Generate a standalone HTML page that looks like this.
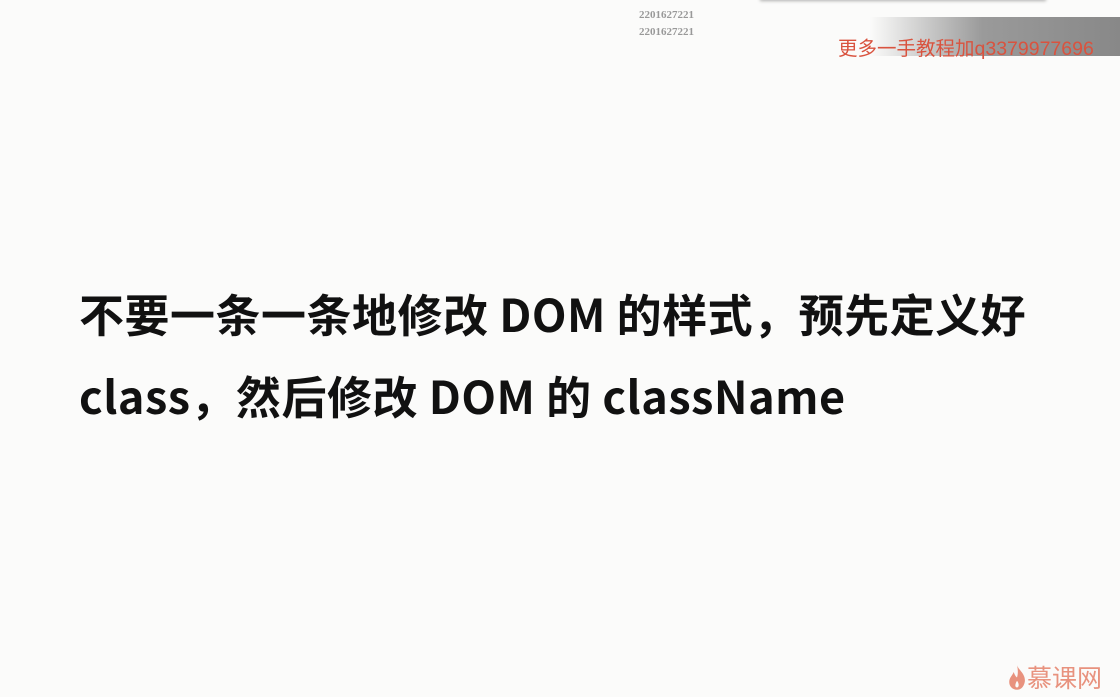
<!DOCTYPE html>
<html><head><meta charset="utf-8"><style>
html,body{margin:0;padding:0}
body{width:1120px;height:697px;background:#fbfbfa;position:relative;overflow:hidden;font-family:"Liberation Sans","Noto Sans CJK SC",sans-serif}
.top{position:absolute;left:760px;top:-4px;width:286px;height:4px;box-shadow:0 1px 3px rgba(0,0,0,.3);background:#fff}
.id{position:absolute;left:639px;font-family:"Liberation Serif",serif;font-size:11px;color:#999;font-weight:bold}
.bar{position:absolute;left:870px;top:17px;width:250px;height:39px;background:linear-gradient(to right,rgba(140,140,140,0),#9a9a9a 45%,#888 100%)}
.ad{position:absolute;left:838px;top:32px;font-size:19.5px;color:#d9533f;white-space:nowrap;font-family:"Liberation Sans","Noto Sans CJK SC",sans-serif}
.main{position:absolute;left:79px;top:272px;font-size:45px;letter-spacing:0.5px;font-weight:bold;line-height:82px;color:#111;white-space:nowrap;font-family:"Noto Sans CJK SC",sans-serif}
.logo{position:absolute;left:1007px;top:659px;font-size:25px;color:#e8927e;font-family:"Noto Sans CJK SC",sans-serif}
</style></head><body>
<div class="top"></div>
<div class="id" style="top:9px">2201627221</div>
<div class="id" style="top:26px">2201627221</div>
<div class="bar"></div>
<div class="ad">更多一手教程加q3379977696</div>
<div class="main">不要一条一条地修改 DOM 的样式，预先定义好<br>class，然后修改 DOM 的 className</div>
<div class="logo"><svg width="20" height="27" viewBox="0 0 18 24" style="vertical-align:-4px"><path d="M9 1C11 6 17 9 16 16C15 21 12 23 9 23C5 23 2 20 2 16C2 12 5 10 6 7C7 10 8 11 9 12C10 9 10 5 9 1Z" fill="#e8927e"/><path d="M9 15C11 17 11 21 9 21C7 21 7 18 9 15Z" fill="#fbfbfa"/></svg>慕课网</div>
</body></html>
